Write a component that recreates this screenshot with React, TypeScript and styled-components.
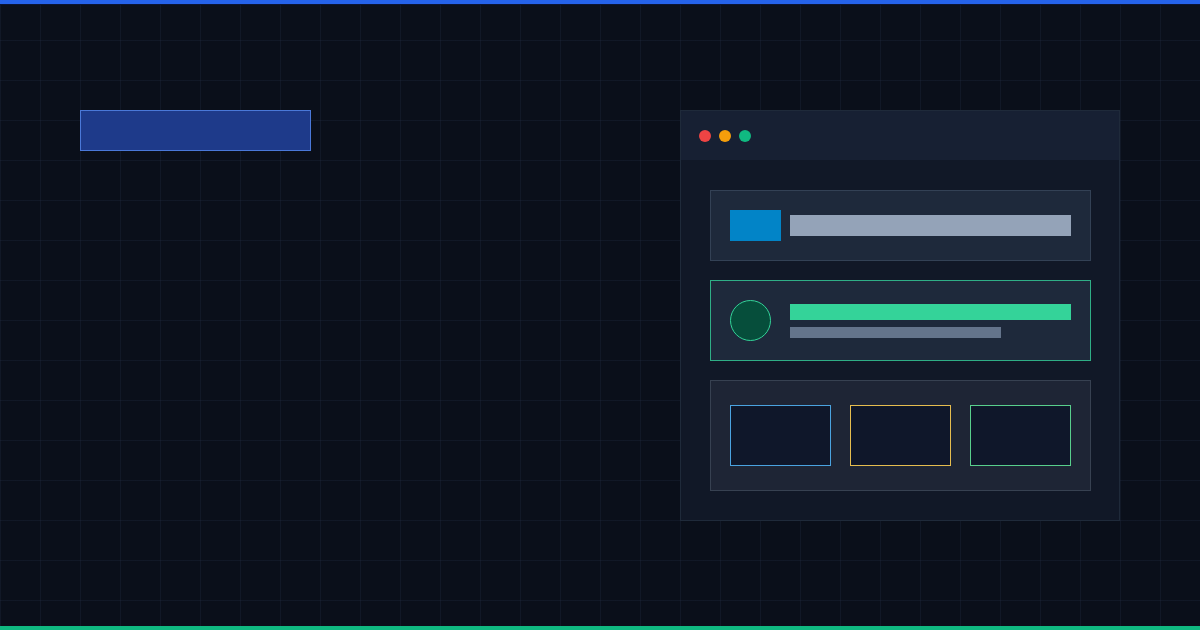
import React from "react";
import styled, { createGlobalStyle } from "styled-components";

const Global = createGlobalStyle`
  html, body { margin: 0; padding: 0; background: #0a0f1a; }
  body { font-family: "Inter", "Liberation Sans", sans-serif; }
`;

const Page = styled.div`
  position: relative;
  width: 1200px;
  height: 630px;
  overflow: hidden;
  box-sizing: border-box;
  background-color: #0a0f1a;
  background-image:
    linear-gradient(to right, rgba(40, 52, 78, 0.25) 1px, transparent 1px),
    linear-gradient(to bottom, rgba(40, 52, 78, 0.25) 1px, transparent 1px);
  background-size: 40px 40px;
  display: flex;
  flex-direction: column;
`;

const Stripe = styled.div<{ $color: string }>`
  height: 4px;
  flex: none;
  background: ${(p) => p.$color};
`;

const TopStripe = styled(Stripe)`
  box-shadow: 0 1px 0 #0b1433;
`;

const Content = styled.main`
  flex: 1;
  display: flex;
  justify-content: space-between;
  align-items: flex-start;
  padding: 106px 80px 0;
`;

const Heading = styled.div`
  width: 231px;
  height: 41px;
  box-sizing: border-box;
  background: #1e3a8a;
  border: 1px solid #4a78d8;
`;

const Window = styled.section`
  width: 440px;
  box-sizing: border-box;
  background: #111827;
  border: 1px solid #1f2a3a;
  display: flex;
  flex-direction: column;
`;

const TitleBar = styled.header`
  height: 49px;
  background: #172033;
  display: flex;
  align-items: center;
  gap: 8px;
  padding-left: 18px;
`;

const Dot = styled.span<{ $color: string }>`
  width: 12px;
  height: 12px;
  border-radius: 50%;
  background: ${(p) => p.$color};
`;

const Body = styled.div`
  padding: 30px 29px 29px;
  display: flex;
  flex-direction: column;
  gap: 19px;
`;

const Card = styled.div<{ $border?: string; $bg?: string }>`
  width: 381px;
  box-sizing: border-box;
  background: ${(p) => p.$bg ?? "#1e293b"};
  border: 1px solid ${(p) => p.$border ?? "#334155"};
  display: flex;
  align-items: center;
`;

const HeaderCard = styled(Card)`
  height: 71px;
  padding: 0 19px;
  gap: 9px;
`;

const ProfileCard = styled(Card)`
  height: 81px;
  padding: 0 19px;
  gap: 19px;
`;

const TileCard = styled(Card)`
  height: 111px;
  padding: 0 19px;
  gap: 19px;
`;

const Badge = styled.div`
  width: 51px;
  height: 31px;
  background: #0284c7;
`;

const Bar = styled.div<{ $w: number; $h: number; $color: string }>`
  width: ${(p) => p.$w}px;
  height: ${(p) => p.$h}px;
  background: ${(p) => p.$color};
`;

const Avatar = styled.div`
  width: 41px;
  height: 41px;
  box-sizing: border-box;
  border-radius: 50%;
  background: #064e3b;
  border: 1.5px solid #34d399;
  flex: none;
`;

const Lines = styled.div`
  display: flex;
  flex-direction: column;
  gap: 7px;
  padding-top: 1px;
`;

const Tile = styled.div<{ $border: string }>`
  width: 101px;
  height: 61px;
  box-sizing: border-box;
  background: #0f172a;
  border: 1px solid ${(p) => p.$border};
`;

export default function App() {
  return (
    <>
      <Global />
      <Page>
        <TopStripe $color="#2563eb" />
        <Content>
          <Heading />
          <Window>
            <TitleBar>
              <Dot $color="#ef4444" />
              <Dot $color="#f59e0b" />
              <Dot $color="#10b981" />
            </TitleBar>
            <Body>
              <HeaderCard>
                <Badge />
                <Bar $w={281} $h={21} $color="#94a3b8" />
              </HeaderCard>
              <ProfileCard $border="#2fae86">
                <Avatar />
                <Lines>
                  <Bar $w={281} $h={16} $color="#34d399" />
                  <Bar $w={211} $h={11} $color="#64748b" />
                </Lines>
              </ProfileCard>
              <TileCard $bg="#1e2535" $border="#374151">
                <Tile $border="#4aa3e0" />
                <Tile $border="#e5bd4f" />
                <Tile $border="#58cf8c" />
              </TileCard>
            </Body>
          </Window>
        </Content>
        <Stripe $color="#10b981" />
      </Page>
    </>
  );
}
